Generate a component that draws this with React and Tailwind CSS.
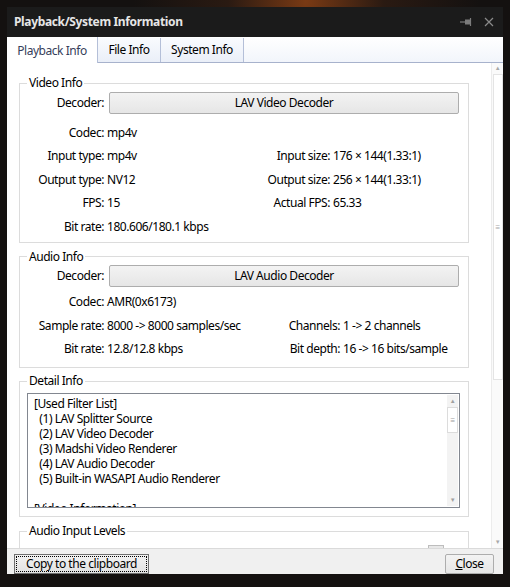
import React from "react";

const font = { fontFamily: '"Segoe UI", "Noto Sans", Arial, sans-serif' };

const Group = ({ title, className = "", children }) => (
  <fieldset className={`border border-[#dcdcdc] w-[450px] ${className}`}>
    <legend className="ml-[7px] px-[2px] leading-[16px] text-[12px] text-black">{title}</legend>
    {children}
  </fieldset>
);

const Btn = ({ children, className = "" }) => (
  <div
    className={`flex items-center justify-center border border-[#adadad] rounded-[2px] bg-gradient-to-b from-[#f3f3f3] to-[#e6e6e6] text-[12px] text-black ${className}`}
  >
    {children}
  </div>
);

const Row = ({ l, v, rl, rv, lw, rw }) => (
  <div className="flex items-center h-[23.5px] pt-[2px] text-[12px] text-black whitespace-nowrap">
    <span className="w-[84px] text-right">{l}</span>
    <span className={`pl-[3px] ${lw}`}>{v}</span>
    <span className={`text-right ${rw}`}>{rl}</span>
    <span className="pl-[3px]">{rv}</span>
  </div>
);

const filters = [
  "[Used Filter List]",
  "  (1) LAV Splitter Source",
  "  (2) LAV Video Decoder",
  "  (3) Madshi Video Renderer",
  "  (4) LAV Audio Decoder",
  "  (5) Built-in WASAPI Audio Renderer",
  " ",
  "[Video Information]",
];

export default function App() {
  return (
    <div
      className="w-[510px] h-[587px] p-[7px] pb-[13px] tracking-[-0.45px] bg-[#141110] bg-[radial-gradient(ellipse_at_60%_0%,#7a3a14_0%,#2a1a12_18%,#141110_40%)]"
      style={font}
    >
      <div className="flex flex-col h-full bg-white">
        {/* title bar */}
        <div className="flex items-center h-[30px] bg-[#1b1b1b] pl-[7px] pr-[9px]">
          <span className="flex-1 text-[12px] font-bold tracking-[-0.35px] text-[#e6e6e6]">Playback/System Information</span>
          <svg width="12" height="10" viewBox="0 0 12 10" className="mr-[12px]">
            <line x1="0" y1="5" x2="5" y2="5" stroke="#7c7c7c" strokeWidth="1.2" />
            <rect x="5" y="2.5" width="5" height="5" fill="#7c7c7c" />
            <line x1="10.5" y1="1" x2="10.5" y2="9" stroke="#7c7c7c" strokeWidth="1.2" />
          </svg>
          <svg width="10" height="10" viewBox="0 0 10 10">
            <path d="M1 1L9 9M9 1L1 9" stroke="#8a8a8a" strokeWidth="1.2" />
          </svg>
        </div>

        {/* tabs */}
        <div className="flex h-[26px] border-b border-[#a7b2cc] bg-gradient-to-b from-[#ffffff] to-[#f2f5fb] text-[12px]">
          <div className="w-[91px] h-[26px] -mb-px bg-white border-r border-[#b4bfd8] flex items-center justify-center pt-[2px] text-[#36405a]">
            Playback Info
          </div>
          <div className="w-[63px] mt-[1px] border-r border-[#b4bfd8] bg-gradient-to-b from-[#f9fbfe] to-[#eaeff8] flex items-center justify-center text-black">
            File Info
          </div>
          <div className="w-[83px] mt-[1px] border-r border-[#b4bfd8] bg-gradient-to-b from-[#f9fbfe] to-[#eaeff8] flex items-center justify-center text-black">
            System Info
          </div>
        </div>

        {/* content */}
        <div className="flex flex-1 min-h-0">
          <div className="w-[484px] overflow-hidden pl-[12px]">
            <Group title="Video Info" className="mt-[12px] pb-[4px]">
              <div className="flex items-center mt-[1px] text-[12px]">
                <span className="w-[84px] text-right">Decoder:</span>
                <Btn className="ml-[5px] w-[350px] h-[22px]">LAV Video Decoder</Btn>
              </div>
              <div className="mt-[6px]">
                <Row l="Codec:" v="mp4v" lw="w-[126px]" rw="w-[100px]" />
                <Row l="Input type:" v="mp4v" rl="Input size:" rv="176 × 144(1.33:1)" lw="w-[126px]" rw="w-[100px]" />
                <Row l="Output type:" v="NV12" rl="Output size:" rv="256 × 144(1.33:1)" lw="w-[126px]" rw="w-[100px]" />
                <Row l="FPS:" v="15" rl="Actual FPS:" rv="65.33" lw="w-[126px]" rw="w-[100px]" />
                <Row l="Bit rate:" v="180.606/180.1 kbps" lw="w-[126px]" rw="w-[100px]" />
              </div>
            </Group>

            <Group title="Audio Info" className="mt-[6px] pb-[7px]">
              <div className="flex items-center text-[12px]">
                <span className="w-[84px] text-right">Decoder:</span>
                <Btn className="ml-[5px] w-[350px] h-[22px]">LAV Audio Decoder</Btn>
              </div>
              <div className="mt-[3px]">
                <Row l="Codec:" v="AMR(0x6173)" lw="w-[146px]" rw="w-[90px]" />
                <Row l="Sample rate:" v="8000 -> 8000 samples/sec" rl="Channels:" rv="1 -> 2 channels" lw="w-[146px]" rw="w-[90px]" />
                <Row l="Bit rate:" v="12.8/12.8 kbps" rl="Bit depth:" rv="16 -> 16 bits/sample" lw="w-[146px]" rw="w-[90px]" />
              </div>
            </Group>

            <Group title="Detail Info" className="mt-[5px] pb-[8px]">
              <div className="flex mt-[4px] ml-[7px] w-[433px] h-[115px] border border-[#828790] bg-white">
                <div className="flex-1 overflow-hidden pl-[6px] pt-[2px] text-[12px] leading-[15px] text-black whitespace-pre">
                  {filters.map((f, i) => (
                    <div key={i}>{f}</div>
                  ))}
                </div>
                <div className="w-[11px] my-[1px] mr-[1px] flex flex-col items-center bg-[#f3f3f3]">
                  <span className="text-[6px] leading-[12px] text-[#a0a0a0]">▲</span>
                  <div className="w-[11px] h-[26px] border border-[#dcdcdc] bg-white flex items-center justify-center text-[8px] text-[#a0a0a0]">
                    ≡
                  </div>
                  <div className="flex-1" />
                  <span className="text-[6px] leading-[12px] text-[#a0a0a0]">▼</span>
                </div>
              </div>
            </Group>

            <Group title="Audio Input Levels" className="mt-[6px] h-[60px]">
              <div className="ml-[408px] mt-[6px] w-[16px] h-[6px] border border-[#bdbdbd] bg-[#e8e8e8]" />
            </Group>
          </div>

          {/* outer scrollbar */}
          <div className="w-[12px] flex flex-col items-center border-l border-[#ececec] bg-[#fafafa]">
            <span className="text-[6px] leading-[11px] text-[#a8a8a8]">▲</span>
            <div className="w-[10px] h-[306px] border border-[#e4e4e4] bg-white flex items-center justify-center text-[8px] text-[#a8a8a8]">
              ≡
            </div>
            <div className="flex-1" />
            <span className="text-[6px] leading-[11px] text-[#a8a8a8]">▼</span>
          </div>
        </div>

        {/* bottom bar */}
        <div className="flex items-start justify-between h-[26px] pt-[5px] pl-[7px] pr-[9px] border-t border-[#dadada] bg-[#f0f0f0]">
          <div className="w-[135px] h-[20px] border border-[#707070] bg-gradient-to-b from-[#f2f2f2] to-[#e2e2e2] p-[1px]">
            <div className="h-full border border-dotted border-black flex items-center justify-center text-[12px] text-black">
              Copy to the clipboard
            </div>
          </div>
          <Btn className="w-[49px] h-[20px] border-[#acacac]">
            <span>
              <span className="underline">C</span>lose
            </span>
          </Btn>
        </div>
      </div>
    </div>
  );
}
